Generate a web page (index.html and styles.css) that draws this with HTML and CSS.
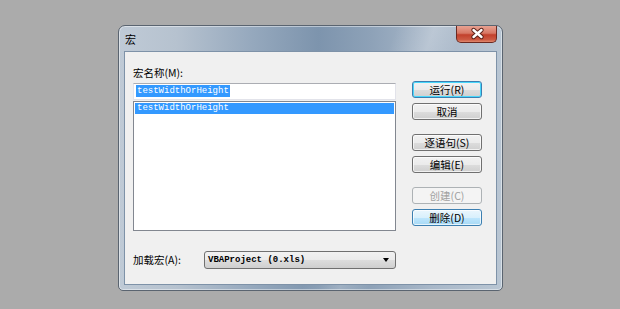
FILE: index.html
```html
<!DOCTYPE html>
<html lang="zh-CN">
<head>
  <meta charset="UTF-8" />
  <title>宏</title>
  <link rel="stylesheet" href="styles.css">
</head>
<body>
  <div class="window">
    <div class="titlebar">
      <span class="title">宏</span>
      <div class="close">
        <svg width="41" height="17" viewBox="0 0 41 17">
          <path d="M16.5 5 L24.5 12 M24.5 5 L16.5 12" stroke="#5b2219" stroke-width="4.4" stroke-linecap="round" fill="none"/>
          <path d="M16.5 5 L24.5 12 M24.5 5 L16.5 12" stroke="#ffffff" stroke-width="2.4" stroke-linecap="round" fill="none"/>
        </svg>
      </div>
    </div>

    <div class="client">
      <!-- macro name + list -->
      <div class="main">
        <div class="label">宏名称(M):</div>
        <div class="name-input"><span class="sel">testWidthOrHeight</span></div>
        <div class="list">
          <div class="item active">testWidthOrHeight</div>
        </div>
        <div class="load-row">
          <span class="label">加载宏(A):</span>
          <div class="combo">
            <span class="combo-text">VBAProject (0.xls)</span>
            <span class="arrow"></span>
          </div>
        </div>
      </div>

      <!-- buttons -->
      <div class="buttons">
        <div class="btn default">运行(R)</div>
        <div class="btn">取消</div>
        <div class="btn gap">逐语句(S)</div>
        <div class="btn">编辑(E)</div>
        <div class="btn gap disabled">创建(C)</div>
        <div class="btn hot">删除(D)</div>
      </div>
    </div>
  </div>
</body>
</html>
```

FILE: styles.css
```css
body {
  margin: 0;
  background: #ababab;
  font-family: "Noto Sans CJK SC", "Liberation Sans", sans-serif;
  font-size: 10.5px;
  color: #000;
}
.window {
  box-sizing: border-box;
  width: 385px;
  height: 266px;
  margin: 25px 0 0 118px;
  border: 1px solid #5a6470;
  border-radius: 7px 7px 5px 5px;
  background:
    linear-gradient(110deg, rgba(255,255,255,0) 58%, rgba(255,255,255,0.22) 66%, rgba(255,255,255,0) 72%),
    linear-gradient(to right, #bfcad6 0%, #b6c2cf 15%, #95a8bd 35%, #7d94ad 52%, #8ea2b8 66%, #a9b8c9 82%, #b9c6d3 100%);
  box-shadow: inset 0 0 0 1px rgba(255,255,255,0.45);
  padding: 0 5px 5px;
  display: flex;
  flex-direction: column;
}
.titlebar {
  height: 25px;
  display: flex;
  justify-content: space-between;
  align-items: flex-start;
}
.title {
  padding: 7px 0 0 1px;
  line-height: 12px;
  font-size: 11px;
}
.close {
  width: 41px;
  height: 17px;
  box-sizing: border-box;
  border: 1px solid #6b2a22;
  border-top: none;
  border-radius: 0 0 5px 5px;
  background: linear-gradient(to bottom, #e8a292 0%, #d77764 45%, #c2402c 55%, #cc5a43 85%, #e08a70 100%);
  overflow: hidden;
}
.close svg {
  display: block;
  margin-top: -1px;
}
.client {
  flex: 1;
  background: #f0f0f0;
  border: 1px solid #7e92a8;
  display: flex;
  padding: 0 14px 0 8px;
}
.main {
  width: 263px;
  margin-right: 16px;
  padding-top: 14px;
}
.label {
  line-height: 14px;
  margin-bottom: 3px;
  white-space: nowrap;
}
.name-input {
  box-sizing: border-box;
  height: 17px;
  background: #fff;
  border: 1px solid #e2e3ea;
  border-top-color: #abadb3;
  padding: 1px 1px 0 2px;
  font-family: "Liberation Mono", monospace;
  font-size: 9px;
  line-height: 12px;
}
.sel {
  display: inline-block;
  background: #3399ff;
  color: #fff;
  padding: 0 1px;
}
.list {
  box-sizing: border-box;
  height: 130px;
  margin-top: 1px;
  background: #fff;
  border: 1px solid #828790;
  padding: 1px;
  font-family: "Liberation Mono", monospace;
  font-size: 9px;
}
.item {
  height: 11px;
  line-height: 11px;
  padding-left: 2px;
}
.item.active {
  background: #3399ff;
  color: #fff;
}
.load-row {
  display: flex;
  align-items: center;
  margin-top: 20px;
}
.load-row .label {
  width: 71px;
  margin: 0;
}
.combo {
  box-sizing: border-box;
  flex: 1;
  height: 18px;
  border: 1px solid #707070;
  border-radius: 3px;
  background: linear-gradient(to bottom, #f2f2f2 0%, #ebebeb 50%, #dddddd 51%, #cfcfcf 100%);
  display: flex;
  align-items: center;
  justify-content: space-between;
  padding: 0 6px 0 3px;
}
.combo-text {
  font-family: "Liberation Mono", monospace;
  font-size: 9px;
  font-weight: bold;
  white-space: pre;
}
.arrow {
  width: 0;
  height: 0;
  border-left: 3.5px solid transparent;
  border-right: 3.5px solid transparent;
  border-top: 4px solid #000;
}
.buttons {
  width: 70px;
  padding-top: 29px;
  display: flex;
  flex-direction: column;
  gap: 5px;
}
.btn {
  box-sizing: border-box;
  height: 17px;
  border: 1px solid #707070;
  border-radius: 3px;
  background: linear-gradient(to bottom, #f2f2f2 0%, #ebebeb 50%, #dddddd 51%, #cfcfcf 100%);
  box-shadow: inset 0 0 0 1px rgba(255,255,255,0.7);
  text-align: center;
  line-height: 15px;
  white-space: nowrap;
}
.btn.gap {
  margin-top: 9px;
}
.btn.default {
  border-color: #3c7fb1;
  box-shadow: inset 0 0 0 1px #48d7fb;
}
.btn.hot {
  border-color: #3c7fb1;
  background: linear-gradient(to bottom, #eaf6fd 0%, #d9f0fc 50%, #bee6fd 51%, #a7d9f5 100%);
}
.btn.disabled {
  border-color: #adb2b5;
  background: #f4f4f4;
  box-shadow: none;
  color: #a0a0a0;
}
```
